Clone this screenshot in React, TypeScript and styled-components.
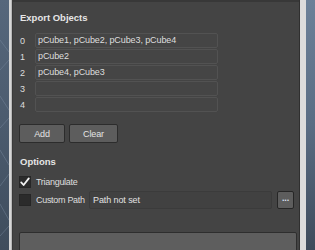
import styled, { createGlobalStyle } from 'styled-components';

const GlobalStyle = createGlobalStyle`
  html, body {
    margin: 0;
    padding: 0;
    overflow: hidden;
  }
  body {
    width: 315px;
    height: 250px;
    font-family: "Liberation Sans", Arial, sans-serif;
    background: #4e5e72;
  }
`;

const exportRows = ['pCube1, pCube2, pCube3, pCube4', 'pCube2', 'pCube4, pCube3', '', ''];

const Wireframe = () => (
  <svg width="100%" height="250" viewBox="0 0 9 250" preserveAspectRatio="none">
    <g stroke="#7c8ea3" strokeWidth="0.6" fill="none" opacity="0.7">
      <path d="M0 40 L9 52 M0 70 L9 60 M0 96 L9 110 M0 128 L9 118 M0 150 L9 165 M0 186 L9 174 M0 204 L9 220 M0 236 L9 226" />
    </g>
  </svg>
);

export default function App() {
  return (
    <Screen>
      <GlobalStyle />
      <Viewport side="left">
        <Wireframe />
      </Viewport>
      <Frame>
        <Panel>
          <Heading>Export Objects</Heading>
          <ObjectList>
            {exportRows.map((row, index) => (
              <ObjectRow key={`export-row-${index}`}>
                <RowIndex>{index}</RowIndex>
                <ObjectField>{row}</ObjectField>
              </ObjectRow>
            ))}
          </ObjectList>
          <ButtonBar>
            <Button width={46}>Add</Button>
            <Button width={49}>Clear</Button>
          </ButtonBar>
          <Heading top={13}>Options</Heading>
          <OptionRow top={8}>
            <CheckBox>
              <svg width="12" height="12" viewBox="0 0 12 12">
                <path d="M2.2 6.4 L4.6 9 L9.8 2.4" stroke="#f2f2f2" strokeWidth="1.8" fill="none" strokeLinecap="round" strokeLinejoin="round" />
              </svg>
            </CheckBox>
            <OptionLabel>Triangulate</OptionLabel>
          </OptionRow>
          <OptionRow top={3}>
            <CheckBox />
            <OptionLabel>Custom Path</OptionLabel>
            <PathField>Path not set</PathField>
            <BrowseButton>...</BrowseButton>
          </OptionRow>
          <BigButton />
        </Panel>
      </Frame>
      <Viewport side="right" />
    </Screen>
  );
}

const Screen = styled('div')`
  display: flex;
  width: 315px;
  height: 250px;
  overflow: hidden;
`;

const Viewport = styled('div')<{ side: 'left' | 'right' }>`
  flex: ${(p) => (p.side === 'left' ? '0 0 9px' : '1 1 auto')};
  height: 250px;
  background: ${(p) =>
    p.side === 'left'
      ? 'linear-gradient(180deg, #56677c 0%, #4b5b6e 50%, #3f4c5c 100%)'
      : 'linear-gradient(180deg, #6c8199 0%, #5a6d84 50%, #3e4b5b 100%)'};
`;

const Frame = styled('div')`
  width: 297px;
  height: 250px;
  box-sizing: border-box;
  border-left: 2px solid #d6d6d6;
  border-right: 6px solid #dcdcdc;
  display: flex;
  background: #3a3a3a;
  padding-left: 2px;
  padding-right: 1px;
  box-shadow: inset 1px 0 0 #b8b8b8, inset -1px 0 0 #2f2f2f;
`;

const Panel = styled('div')`
  flex: 1;
  background: #444444;
  border-top: 2px solid #383838;
  padding: 10px 0 0 6px;
  display: flex;
  flex-direction: column;
  color: #dedede;
  font-size: 9px;
  letter-spacing: -0.1px;
`;

const Heading = styled('div')<{ top?: number }>`
  margin-top: ${(p) => p.top ?? 0}px;
  margin-left: 1px;
  font-weight: bold;
  font-size: 9.5px;
  letter-spacing: 0;
  line-height: 12px;
  color: #e6e6e6;
`;

const ObjectList = styled('div')`
  margin-top: 9px;
  display: flex;
  flex-direction: column;
  gap: 1px;
`;

const ObjectRow = styled('div')`
  display: flex;
  align-items: center;
  height: 15px;
`;

const RowIndex = styled('div')`
  width: 16px;
  padding-left: 1px;
  box-sizing: border-box;
`;

const ObjectField = styled('div')`
  width: 183px;
  height: 15px;
  box-sizing: border-box;
  border: 1px solid #525252;
  border-radius: 2px;
  background: #454545;
  padding-left: 2px;
  line-height: 13px;
  white-space: nowrap;
  overflow: hidden;
`;

const ButtonBar = styled('div')`
  margin-top: 12px;
  display: flex;
  gap: 4px;
`;

const Button = styled('div')<{ width: number }>`
  width: ${(p) => p.width}px;
  height: 19px;
  box-sizing: border-box;
  border: 1px solid #2c2c2c;
  border-radius: 2px;
  background: #5d5d5d;
  display: flex;
  align-items: center;
  justify-content: center;
  color: #e4e4e4;
`;

const OptionRow = styled('div')<{ top: number }>`
  margin-top: ${(p) => p.top}px;
  display: flex;
  align-items: center;
  height: 18px;
`;

const CheckBox = styled('div')`
  width: 12px;
  height: 12px;
  box-sizing: border-box;
  background: #2b2b2b;
  border: 1px solid #262626;
  display: flex;
  align-items: center;
  justify-content: center;
  margin-right: 5px;
  svg {
    flex: none;
  }
`;

const OptionLabel = styled('div')`
  width: 53px;
  white-space: nowrap;
  letter-spacing: -0.3px;
`;

const PathField = styled('div')`
  width: 183px;
  height: 18px;
  box-sizing: border-box;
  border: 1px solid #3b3b3b;
  border-radius: 2px;
  background: #414141;
  padding-left: 3px;
  line-height: 16px;
  color: #e2e2e2;
`;

const BrowseButton = styled('div')`
  margin-left: 5px;
  width: 17px;
  height: 18px;
  box-sizing: border-box;
  border: 1px solid #262626;
  border-radius: 2px;
  background: #5d5d5d;
  color: #d8e0f0;
  display: flex;
  align-items: flex-start;
  justify-content: center;
  line-height: 12px;
  font-weight: bold;
`;

const BigButton = styled('div')`
  margin-top: 23px;
  width: 278px;
  height: 34px;
  flex: none;
  box-sizing: border-box;
  border: 1px solid #2e2e2e;
  border-radius: 2px;
  background: #5e5e5e;
`;
